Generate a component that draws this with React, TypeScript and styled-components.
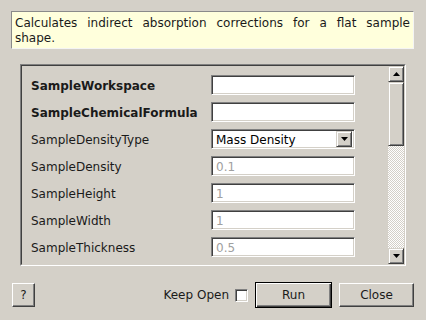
import React from "react";
import styled, { createGlobalStyle, css } from "styled-components";

const GlobalStyle = createGlobalStyle`
  html, body {
    margin: 0;
    padding: 0;
    background: #d4d0c8;
    font-family: "DejaVu Sans", "Noto Sans", sans-serif;
    font-size: 12px;
    color: #000;
  }
  #root {
    width: 426px;
    height: 320px;
    overflow: hidden;
  }
`;

const sunken = css`
  border: 1px solid;
  border-color: #808080 #ffffff #ffffff #808080;
  box-shadow: inset 1px 1px 0 #404040, inset -1px -1px 0 #d4d0c8;
`;

const raised = css`
  background: #d4d0c8;
  border: 1px solid;
  border-color: #d4d0c8 #404040 #404040 #d4d0c8;
  box-shadow: inset 1px 1px 0 #ffffff, inset -1px -1px 0 #808080;
`;

const Window = styled.div`
  display: flex;
  flex-direction: column;
  width: 426px;
  height: 320px;
  box-sizing: border-box;
`;

const Description = styled.div`
  margin: 11px 12px 0 11px;
  height: 38px;
  box-sizing: border-box;
  padding: 4px 3px 0 3px;
  background: #ffffdc;
  border: 1px solid;
  border-color: #8a8a8a #f4f4f4 #f4f4f4 #8a8a8a;
  line-height: 15px;
  text-align: justify;
  color: #1a1a1a;
`;

const Frame = styled.div`
  margin: 15px 20px 0 20px;
  height: 202px;
  box-sizing: border-box;
  border: 1px solid;
  border-color: #808080 #ffffff #ffffff #808080;
`;

const FrameInner = styled.div`
  display: flex;
  height: 100%;
  box-sizing: border-box;
  border: 1px solid;
  border-color: #404040 #d4d0c8 #d4d0c8 #404040;
  overflow: hidden;
`;

const Content = styled.div`
  flex: 1;
  display: flex;
  flex-direction: column;
  gap: 7px;
  padding: 9px 0 0 9px;
  overflow: hidden;
`;

const Row = styled.div`
  display: flex;
  align-items: center;
  height: 20px;
  flex-shrink: 0;
`;

const Label = styled.div<{ $bold?: boolean }>`
  width: 180px;
  flex-shrink: 0;
  padding-top: 1px;
  font-weight: ${(p) => (p.$bold ? "bold" : "normal")};
  color: #1a1a1a;
  white-space: nowrap;
`;

const Field = styled.div<{ $muted?: boolean }>`
  ${sunken};
  width: 144px;
  height: 20px;
  box-sizing: border-box;
  background: #ffffff;
  padding: 1px 4px 0;
  display: flex;
  align-items: center;
  color: ${(p) => (p.$muted ? "#a0a0a0" : "#000")};
`;

const Combo = styled(Field)`
  justify-content: space-between;
  padding: 0 2px 0 4px;
`;

const ComboText = styled.span`
  padding-top: 1px;
`;

const DropButton = styled.div`
  ${raised};
  width: 16px;
  height: 16px;
  box-sizing: border-box;
  display: flex;
  align-items: center;
  justify-content: center;
`;

const Scrollbar = styled.div`
  width: 16px;
  flex-shrink: 0;
  display: flex;
  flex-direction: column;
`;

const ScrollButton = styled.div`
  ${raised};
  width: 16px;
  height: 16px;
  box-sizing: border-box;
  display: flex;
  align-items: center;
  justify-content: center;
  flex-shrink: 0;
`;

const Thumb = styled.div`
  ${raised};
  height: 64px;
  box-sizing: border-box;
  flex-shrink: 0;
`;

const Trough = styled.div`
  flex: 1;
  background-color: #d4d0c8;
  background-image: repeating-conic-gradient(#ffffff 0 25%, #d4d0c8 0 50%);
  background-size: 2px 2px;
`;

const Footer = styled.div`
  display: flex;
  align-items: center;
  height: 26px;
  margin-top: 16px;
  padding: 0 12px;
`;

const Button = styled.div<{ $w: number; $default?: boolean }>`
  width: ${(p) => p.$w}px;
  height: ${(p) => (p.$default ? 26 : 24)}px;
  box-sizing: border-box;
  display: flex;
  align-items: center;
  justify-content: center;
  color: #1a1a1a;
  background: #d4d0c8;
  ${(p) =>
    p.$default
      ? css`
          border: 1px solid #000;
          box-shadow: inset 1px 1px 0 #ffffff, inset -1px -1px 0 #404040,
            inset -2px -2px 0 #808080;
        `
      : css`
          border: 1px solid;
          border-color: #ffffff #404040 #404040 #ffffff;
          box-shadow: inset -1px -1px 0 #808080;
        `}
`;

const Spacer = styled.div`
  flex: 1;
`;

const CheckText = styled.span`
  color: #1a1a1a;
`;

const CheckBox = styled.div`
  ${sunken};
  width: 13px;
  height: 13px;
  box-sizing: border-box;
  background: #fff;
  margin: 0 7px 0 6px;
`;

const Gap = styled.div`
  width: 7px;
`;

const Arrow = ({ up }: { up?: boolean }) => (
  <svg width="7" height="4" viewBox="0 0 7 4">
    <path d={up ? "M3.5 0 L7 4 L0 4 Z" : "M0 0 L7 0 L3.5 4 Z"} fill="#000" />
  </svg>
);

type Prop = { label: string; value?: string; bold?: boolean; combo?: boolean };

const props: Prop[] = [
  { label: "SampleWorkspace", bold: true },
  { label: "SampleChemicalFormula", bold: true },
  { label: "SampleDensityType", value: "Mass Density", combo: true },
  { label: "SampleDensity", value: "0.1" },
  { label: "SampleHeight", value: "1" },
  { label: "SampleWidth", value: "1" },
  { label: "SampleThickness", value: "0.5" },
  { label: "" },
];

export default function App() {
  return (
    <>
      <GlobalStyle />
      <Window>
        <Description>
          Calculates indirect absorption corrections for a flat sample shape.
        </Description>
        <Frame>
          <FrameInner>
            <Content>
              {props.map((p, i) => (
                <Row key={i}>
                  <Label $bold={p.bold}>{p.label}</Label>
                  {p.combo ? (
                    <Combo>
                      <ComboText>{p.value}</ComboText>
                      <DropButton>
                        <Arrow />
                      </DropButton>
                    </Combo>
                  ) : (
                    <Field $muted>{p.value ?? ""}</Field>
                  )}
                </Row>
              ))}
            </Content>
            <Scrollbar>
              <ScrollButton>
                <Arrow up />
              </ScrollButton>
              <Thumb />
              <Trough />
              <ScrollButton>
                <Arrow />
              </ScrollButton>
            </Scrollbar>
          </FrameInner>
        </Frame>
        <Footer>
          <Button $w={23}>?</Button>
          <Spacer />
          <CheckText>Keep Open</CheckText>
          <CheckBox />
          <Button $w={77} $default>
            Run
          </Button>
          <Gap />
          <Button $w={75}>Close</Button>
        </Footer>
      </Window>
    </>
  );
}
